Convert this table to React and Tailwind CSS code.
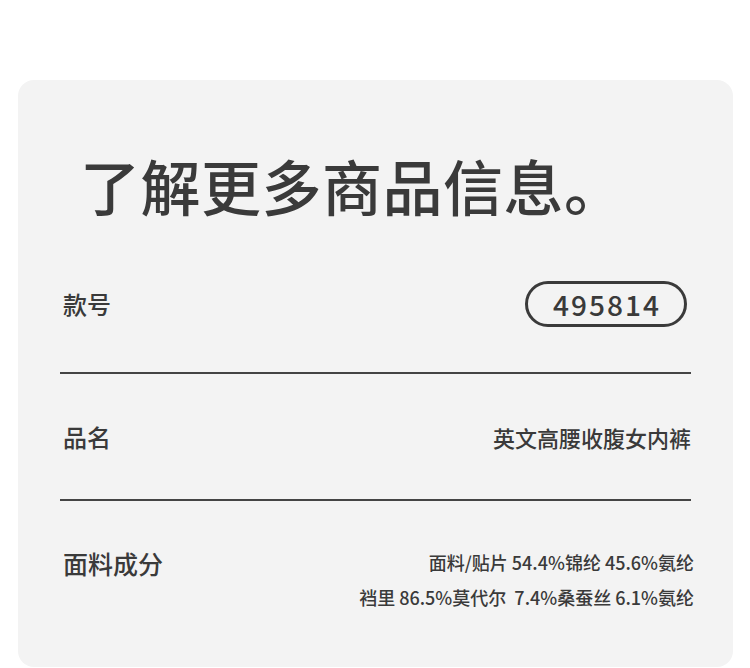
export default function App() {
  return (
    <div className="min-h-[668px] bg-white pt-[80px] pl-[18px] font-['Noto_Sans_CJK_SC',sans-serif] text-[#3a3a3a]">
      <div className="flex h-[587px] w-[715px] flex-col rounded-2xl bg-[#f3f3f3] px-[42px]">
        <h1 className="mt-[75px] pl-[20px] text-[60px] font-medium leading-[60px] tracking-[0.5px]">了解更多商品信息。</h1>

        <div className="mt-[66px] flex items-center justify-between border-b-2 border-[#444] pb-[45px] pl-[3px] pr-[4px]">
          <span className="text-[24px] font-medium leading-[28px]">款号</span>
          <span className="flex h-[46px] w-[162px] items-center justify-center rounded-full border-[3px] border-[#3a3a3a] pl-[2px] text-[28px] font-medium leading-none tracking-[2px]">
            495814
          </span>
        </div>

        <div className="flex h-[127px] items-center justify-between border-b-2 border-[#444] pl-[3px]">
          <span className="text-[24px] font-medium leading-[28px]">品名</span>
          <span className="text-[22px] font-medium leading-[28px]">英文高腰收腹女内裤</span>
        </div>

        <div className="flex items-start justify-between pl-[3px] pt-[44px]">
          <span className="mt-[4px] text-[25px] font-medium leading-[28px]">面料成分</span>
          <div className="-mr-[3px] text-right text-[18px] font-medium leading-[35px]">
            <p>面料/贴片 54.4%锦纶 45.6%氨纶</p>
            <p>裆里 86.5%莫代尔&nbsp; 7.4%桑蚕丝 6.1%氨纶</p>
          </div>
        </div>
      </div>
    </div>
  );
}
